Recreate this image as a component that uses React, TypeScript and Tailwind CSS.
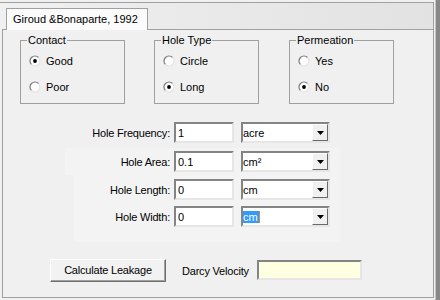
import React from "react"

const Radio = ({ checked }: { checked?: boolean }) => (
    <svg width="12" height="12" viewBox="0 0 12 12" className="shrink-0">
        <circle cx="6" cy="6" r="5" fill="#ffffff" />
        <path d="M2.46 9.54 A5 5 0 0 1 9.54 2.46" stroke="#7a7a7a" strokeWidth="1.2" fill="none" />
        <path d="M9.54 2.46 A5 5 0 0 1 2.46 9.54" stroke="#e3e3e3" strokeWidth="1.2" fill="none" />
        {checked && <circle cx="6" cy="6" r="1.9" fill="#000000" />}
    </svg>
)

const Group = ({ title, options, selected, className = "" }: { title: string; options: string[]; selected: number; className?: string }) => (
    <div className={`w-[105px] h-[64px] border border-[#a0a0a0] flex flex-col ${className}`}>
        <span className="-mt-[8px] ml-[6px] px-[1px] w-fit leading-[14px] bg-[#f0f0f0]">{title}</span>
        {options.map((o, i) => (
            <div key={o} className={`h-[20px] flex items-center gap-[5px] pl-[8px] ${i === 0 ? "mt-[4px]" : "mt-[6px]"}`}>
                <Radio checked={i === selected} />
                <span className="leading-[14px]">{o}</span>
            </div>
        ))}
    </div>
)

const TextBox = ({ value }: { value: string }) => (
    <div className="w-[60px] h-[21px] bg-white border-2 border-t-[#848484] border-l-[#848484] border-b-[#e6e6e6] border-r-[#e6e6e6] flex items-center pl-[2px] leading-[14px]">
        {value}
    </div>
)

const Select = ({ value, focused }: { value: React.ReactNode; focused?: boolean }) => (
    <div className="ml-[7px] w-[89px] h-[21px] bg-white border-2 border-t-[#848484] border-l-[#848484] border-b-[#e6e6e6] border-r-[#e6e6e6] flex items-center">
        <div className="flex-1 leading-[14px]">
            {focused ? (
                <span className="bg-[#3399ff] text-white pr-[1px] border-r border-r-[#d08a3c]">{value}</span>
            ) : (
                value
            )}
        </div>
        <div className="w-[16px] h-[17px] bg-[#f0f0f0] border border-t-white border-l-white border-b-[#696969] border-r-[#696969] flex items-center justify-center">
            <svg width="7" height="4" viewBox="0 0 7 4">
                <path d="M0 0 H7 L3.5 4 Z" fill="#000000" />
            </svg>
        </div>
    </div>
)

const Row = ({ label, value, unit, labelW, focused, className = "" }: { label: string; value: string; unit: React.ReactNode; labelW: string; focused?: boolean; className?: string }) => (
    <div className={`flex items-center ${className}`}>
        <span className={`${labelW} text-right leading-[14px] tracking-[-0.2px]`}>{label}</span>
        <div className="ml-[4px]">
            <TextBox value={value} />
        </div>
        <Select value={unit} focused={focused} />
    </div>
)

export default function App() {
    return (
        <div className="w-[440px] h-[300px] bg-[#f0f0f0] flex overflow-hidden font-['Liberation_Sans',Arial,sans-serif] text-[11px] text-black">
            <div className="w-[435px] flex flex-col">
                <div className="h-[29px] pt-[2px]">
                    <div className="w-[434px] h-[27px] border-t border-r border-[#a0a0a0] bg-linear-to-r from-[#f0f0f0] to-[#e2e2e2]">
                        <div className="relative z-10 ml-[6px] mt-[5px] w-[142px] h-[22px] border border-b-0 border-[#a0a0a0] bg-[#fbfbfb] flex items-center pl-[6px] pb-[1px] leading-[14px]">
                            Giroud &amp;Bonaparte, 1992
                        </div>
                    </div>
                </div>

                <div className="ml-[2px] w-[432px] h-[269px] border border-[#a0a0a0] bg-[#f0f0f0] flex flex-col">
                    <div className="flex mt-[10px] ml-[17px]">
                        <Group title="Contact" options={["Good", "Poor"]} selected={0} />
                        <Group title="Hole Type" options={["Circle", "Long"]} selected={1} className="ml-[29px]" />
                        <Group title="Permeation" options={["Yes", "No"]} selected={1} className="ml-[30px]" />
                    </div>

                    <div className="ml-[62px] w-[275px] mt-[14px] flex flex-col">
                        <div className="h-[30px] pt-[4px]">
                            <Row label="Hole Frequency:" value="1" unit="acre" labelW="w-[105px]" />
                        </div>
                        <div className="h-[27px] pt-[3px] bg-[#f3f3f3]">
                            <Row label="Hole Area:" value="0.1" unit="cm²" labelW="w-[105px]" />
                        </div>
                        <div className="ml-[9px] h-[67px] pt-[4px] bg-[#f3f3f3]">
                            <Row label="Hole Length:" value="0" unit="cm" labelW="w-[96px]" />
                            <Row label="Hole Width:" value="0" unit="cm" labelW="w-[96px]" focused className="mt-[6px]" />
                        </div>
                    </div>

                    <div className="flex items-start mt-[17px] ml-[47px]">
                        <button className="w-[116px] h-[23px] bg-[#f2f2f2] border border-t-white border-l-white border-b-[#6e6e6e] border-r-[#6e6e6e] shadow-[inset_-1px_-1px_0_#a0a0a0] leading-[14px] pb-[1px] tracking-[-0.2px]">
                            Calculate Leakage
                        </button>
                        <span className="ml-[16px] h-[23px] flex items-center leading-[14px] tracking-[-0.2px]">Darcy Velocity</span>
                        <div className="ml-[8px] mt-[1px] w-[105px] h-[20px] bg-[#ffffe1] border-2 border-t-[#848484] border-l-[#848484] border-b-[#e6e6e6] border-r-[#e6e6e6]" />
                    </div>
                </div>
            </div>
            <div className="w-[5px] h-full border-l border-l-[#c4c4c4] bg-[#888888]" />
        </div>
    )
}
